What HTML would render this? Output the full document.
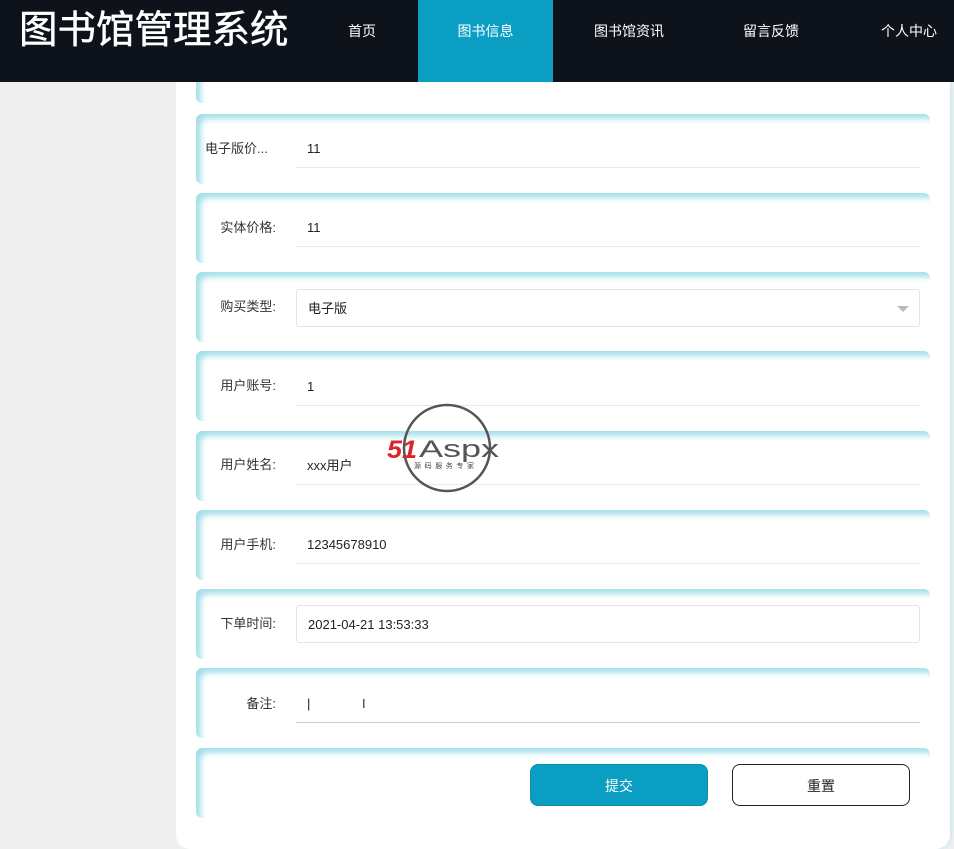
<!DOCTYPE html>
<html><head><meta charset="utf-8"><style>
*{margin:0;padding:0;box-sizing:border-box}
body{width:954px;height:849px;overflow:hidden;background:#efefef;font-family:"Liberation Sans","Noto Sans CJK SC",sans-serif;position:relative}
.hd{position:absolute;left:0;top:0;width:954px;height:82px;background:#0d121b;z-index:1}
.title{position:absolute;left:19px;top:8px;color:#fff;font-size:38.5px;line-height:46px;font-weight:normal;-webkit-text-stroke:0.5px #fff}
.nav{position:absolute;top:0;height:82px;line-height:62px;color:#fff;font-size:14px;text-align:center}
.act{background:#0a9fc2}
.panel{position:absolute;left:176px;top:82px;width:774px;height:767px;background:#fff;border-radius:0 0 14px 14px;box-shadow:2px 0 3px #cfe9ee}
.row{position:absolute;left:196px;width:734px;height:70px;border-radius:6px;box-shadow:inset 6px 6px 6px -1px #a6e0ea;background:#fff}
.lab{position:absolute;right:678px;font-size:13px;color:#333;line-height:20px;white-space:nowrap}
.inp{position:absolute;left:296px;width:624px;height:38px;border-bottom:1px solid #e8e8e8;font-size:13px;color:#222;line-height:38px;padding-left:11px}
.box{border:1px solid #e3e3e3;border-radius:3px}
.btn{position:absolute;top:764px;width:178px;height:42px;border-radius:8px;font-size:14px;text-align:center;line-height:42px}
</style></head><body>
<div class="hd">
<div class="title">图书馆管理系统</div>
<div class="nav" style="left:332px;width:60px">首页</div>
<div class="nav act" style="left:418px;width:135px">图书信息</div>
<div class="nav" style="left:579px;width:100px">图书馆资讯</div>
<div class="nav" style="left:731px;width:80px">留言反馈</div>
<div class="nav" style="left:869px;width:80px">个人中心</div>
</div>
<div class="panel"></div>
<div class="row" style="top:33px"></div>
<div class="row" style="top:114px"></div>
<div class="row" style="top:193px"></div>
<div class="row" style="top:272px"></div>
<div class="row" style="top:351px"></div>
<div class="row" style="top:431px"></div>
<div class="row" style="top:510px"></div>
<div class="row" style="top:589px"></div>
<div class="row" style="top:668px"></div>
<div class="row" style="top:748px"></div>

<div class="lab" style="top:139px;left:205px;right:auto">电子版价...</div>
<div class="inp" style="top:130px">11</div>
<div class="lab" style="top:218px">实体价格:</div>
<div class="inp" style="top:209px">11</div>
<div class="lab" style="top:297px">购买类型:</div>
<div class="inp box" style="top:289px">电子版<span style="position:absolute;right:10px;top:16px;border:6px solid transparent;border-top:6px solid #bbb;border-bottom:0"></span></div>
<div class="lab" style="top:376px">用户账号:</div>
<div class="inp" style="top:368px">1</div>
<div class="lab" style="top:455px">用户姓名:</div>
<div class="inp" style="top:447px">xxx用户</div>
<div class="lab" style="top:535px">用户手机:</div>
<div class="inp" style="top:526px">12345678910</div>
<div class="lab" style="top:614px">下单时间:</div>
<div class="inp box" style="top:605px">2021-04-21 13:53:33</div>
<div class="lab" style="top:694px">备注:</div>
<div class="inp" style="top:685px;border-bottom:1px solid #ccc">|<span style="position:absolute;left:66px;color:#333">I</span></div>

<div class="btn" style="left:530px;background:#0a9fc2;color:#fff;border:1px solid #0890b0">提交</div>
<div class="btn" style="left:732px;background:#fff;color:#222;border:1.5px solid #222">重置</div>

<svg style="position:absolute;left:385px;top:402px" width="130" height="92" viewBox="0 0 130 92">
<circle cx="62" cy="46" r="43" fill="none" stroke="#555" stroke-width="2.5"/>
<text x="2" y="56" font-family="Liberation Sans" font-style="italic" font-weight="bold" font-size="25" fill="#d9262c" textLength="30" lengthAdjust="spacingAndGlyphs">51</text>
<text x="34" y="55" font-family="Liberation Sans" font-size="24" fill="#555" textLength="80" lengthAdjust="spacingAndGlyphs">Aspx</text>
<text x="29" y="66" font-family="Noto Sans CJK SC" font-size="7" fill="#444" textLength="60" lengthAdjust="spacing">源码服务专家</text>
</svg>
</body></html>
